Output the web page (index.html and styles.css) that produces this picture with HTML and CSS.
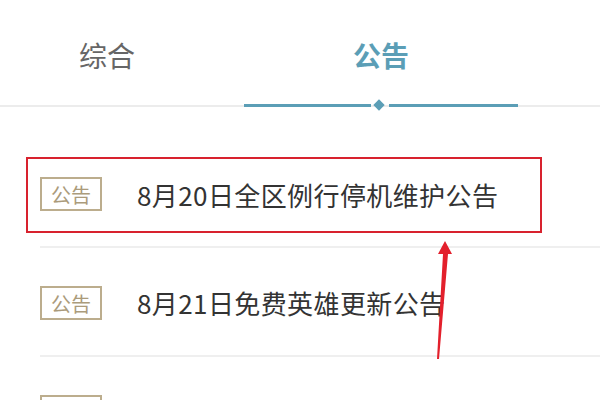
FILE: index.html
```html
<!DOCTYPE html>
<html lang="zh-CN">
<head>
    <meta charset="UTF-8">
    <meta name="viewport" content="width=device-width, initial-scale=1.0">
    <title>公告</title>
    <link rel="stylesheet" href="styles.css">
</head>
<body>
    <div class="page">
        <div class="tabs">
            <div class="tab">综合</div>
            <div class="tab active">公告</div>
        </div>

        <ul class="news-list">
            <li class="news-item">
                <span class="badge">公告</span>
                <span class="title">8月20日全区例行停机维护公告</span>
            </li>
            <li class="news-item">
                <span class="badge">公告</span>
                <span class="title">8月21日免费英雄更新公告</span>
            </li>
            <li class="news-item">
                <span class="badge">公告</span>
                <span class="title">游戏环境净化处罚公示8月15日</span>
            </li>
        </ul>

        <!-- annotation drawn over the screenshot -->
        <div class="mark-box"></div>
        <svg class="mark-arrow" width="20" height="124" viewBox="0 0 20 124">
            <polygon points="9,0 16,13 12,13 3,118 1,118 7,13 2,13" fill="#e3202c"/>
        </svg>
    </div>
</body>
</html>
```

FILE: styles.css
```css
body {
    margin: 0;
    padding: 0;
    background: #ffffff;
    font-family: "Noto Sans CJK SC", "Noto Sans", sans-serif;
    overflow: hidden;
}

.page {
    position: relative;
    width: 600px;
    height: 400px;
    overflow: hidden;
}

.tabs {
    display: flex;
    height: 105px;
    border-bottom: 2px solid #ececec;
}

.tab {
    position: relative;
    width: 274px;
    padding-top: 33px;
    text-align: center;
    font-size: 28px;
    line-height: 44px;
    color: #666666;
    box-sizing: border-box;
}

.tab:first-child {
    margin-left: -30px;
}

.tab.active {
    color: #5b9eb6;
    font-weight: bold;
}

/* active line, split around the diamond */
.tab.active::before,
.tab.active::after {
    content: "";
    position: absolute;
    bottom: -2px;
    height: 3px;
    background: #5b9eb6;
}

.tab.active::before {
    left: 0;
    width: 127px;
}

.tab.active::after {
    right: 0;
    width: 129px;
}

.tabs::after {
    content: "";
    position: absolute;
    left: 375px;
    top: 101px;
    width: 8px;
    height: 8px;
    background: #5b9eb6;
    transform: rotate(45deg);
}

.news-list {
    list-style: none;
    margin: 34px 0 0 40px;
    padding: 0;
}

.news-item {
    display: flex;
    align-items: center;
    height: 105px;
    padding-top: 2px;
    box-sizing: content-box;
    border-bottom: 2px solid #efefef;
}

.news-item:first-child {
    height: 104px;
    padding-top: 1px;
}

.badge {
    width: 62px;
    height: 34px;
    border: 2px solid #bcad8d;
    box-sizing: border-box;
    font-size: 20px;
    line-height: 31px;
    text-align: center;
    color: #ab9b7b;
}

.title {
    margin-left: 35px;
    font-size: 26px;
    letter-spacing: 0.4px;
    color: #333333;
    white-space: nowrap;
}

.mark-box {
    position: absolute;
    left: 26px;
    top: 157px;
    width: 516px;
    height: 76px;
    border: 2px solid #d8222e;
    box-sizing: border-box;
}

.mark-arrow {
    position: absolute;
    left: 436px;
    top: 241px;
}
```
